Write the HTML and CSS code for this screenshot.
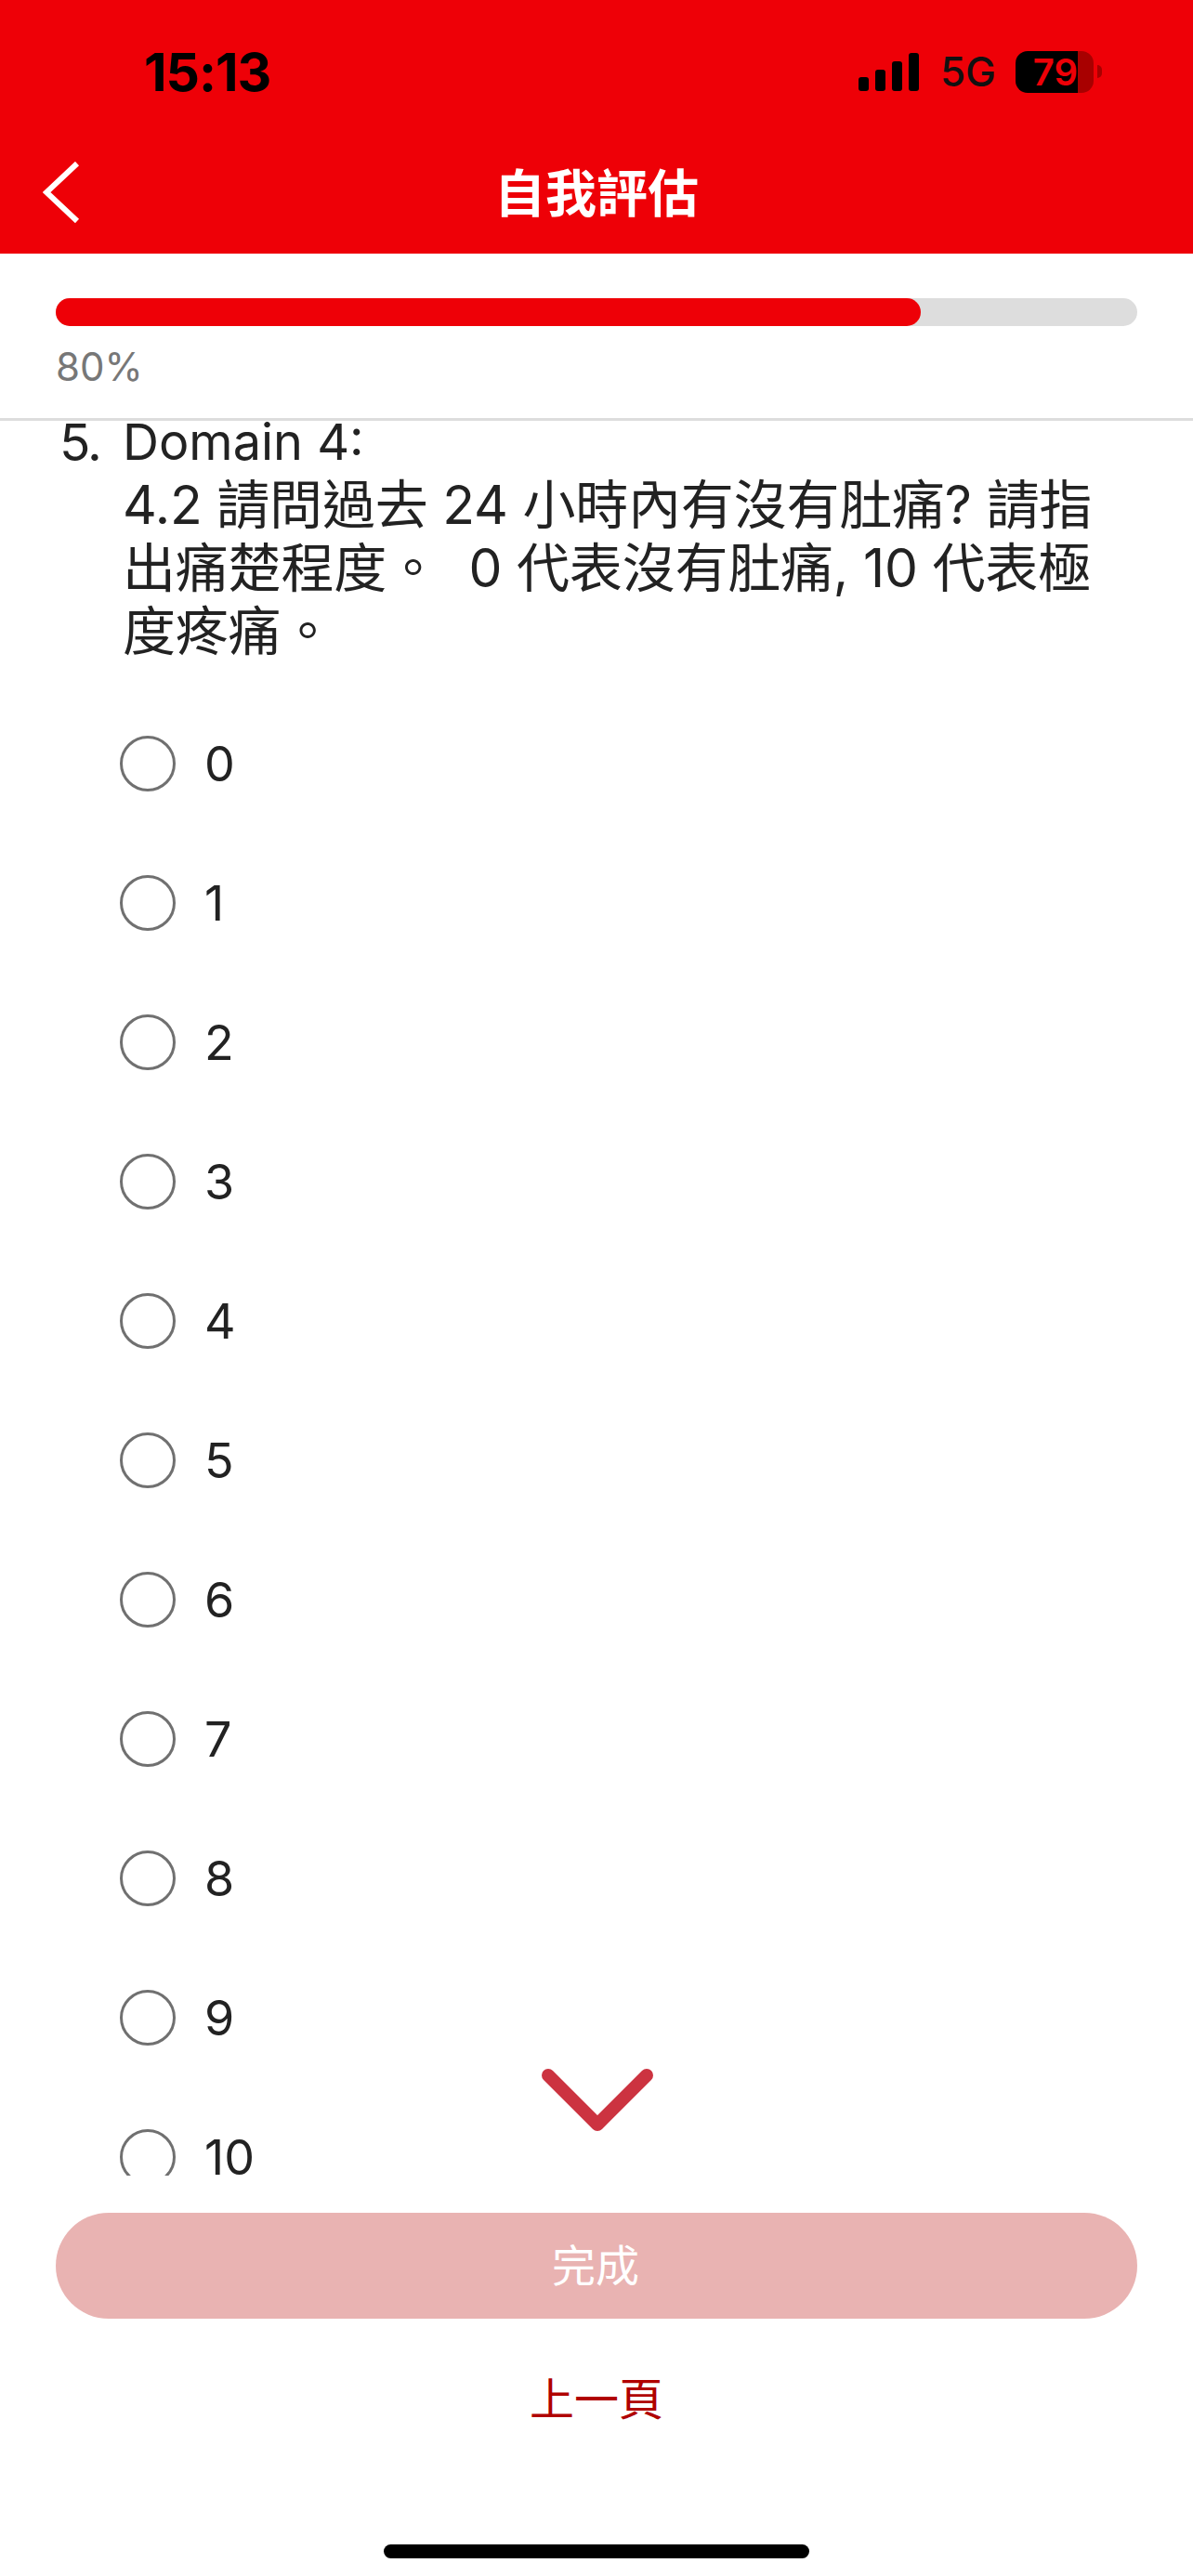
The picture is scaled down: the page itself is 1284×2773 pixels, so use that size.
FILE: index.html
```html
<!DOCTYPE html>
<html lang="zh-Hant">
<head>
    <meta charset="UTF-8">
    <meta name="viewport" content="width=device-width, initial-scale=1.0">
    <title>自我評估</title>
    <link rel="stylesheet" href="styles.css">
</head>
<body>

    <div id="app">
        <header class="top">
            <div class="status">
                <span class="time">15:13</span>
                <div class="status-right">
                    <svg class="signal" width="65" height="41" viewBox="0 0 65 41">
                        <rect x="0" y="26" width="11" height="15" rx="3"/>
                        <rect x="18" y="18" width="11" height="23" rx="3"/>
                        <rect x="36" y="9" width="11" height="32" rx="3"/>
                        <rect x="54" y="0" width="11" height="41" rx="3"/>
                    </svg>
                    <span class="network">5G</span>
                    <div class="battery"><span>79</span></div>
                    <div class="battery-nub"></div>
                </div>
            </div>
            <div class="nav">
                <svg class="back" width="40" height="66" viewBox="0 0 40 66">
                    <path d="M37 2 L4 33 L37 64" fill="none" stroke="#fff" stroke-width="6"/>
                </svg>
                <h1>自我評估</h1>
            </div>
        </header>

        <section class="progress">
            <div class="track"><div class="fill" style="width: 80%"></div></div>
            <div class="percent">80%</div>
        </section>

        <main class="content">
            <div class="question">
                <span class="num">5.</span>
                <div class="question-text">
                    <div class="domain">Domain 4:</div>
                    <p>4.2 請問過去 24 小時內有沒有肚痛? 請指出痛楚程度。 &nbsp;0 代表沒有肚痛, 10 代表極度疼痛。</p>
                </div>
            </div>
            <div class="options">
                <label class="option"><i class="radio"></i>0</label>
                <label class="option"><i class="radio"></i>1</label>
                <label class="option"><i class="radio"></i>2</label>
                <label class="option"><i class="radio"></i>3</label>
                <label class="option"><i class="radio"></i>4</label>
                <label class="option"><i class="radio"></i>5</label>
                <label class="option"><i class="radio"></i>6</label>
                <label class="option"><i class="radio"></i>7</label>
                <label class="option"><i class="radio"></i>8</label>
                <label class="option"><i class="radio"></i>9</label>
                <label class="option"><i class="radio"></i>10</label>
            </div>
            <svg class="more" width="120" height="68" viewBox="0 0 120 68">
                <path d="M7 7 L60 60 L113 7" fill="none" stroke="#cc3340" stroke-width="14" stroke-linecap="round" stroke-linejoin="round"/>
            </svg>
        </main>

        <footer class="actions">
            <button class="done">完成</button>
            <button class="prev">上一頁</button>
            <div class="home-bar"></div>
        </footer>
    </div>

</body>
</html>
```

FILE: styles.css
```css
* {
    box-sizing: border-box;
}

body {
    margin: 0;
    background-color: #fff;
    font-family: Inter, "Noto Sans CJK TC", sans-serif;
    color: #222;
}

#app {
    display: flex;
    flex-direction: column;
    height: 2773px;
    overflow: hidden;
}

.top {
    height: 273px;
    background-color: #ee0007;
}

.status {
    display: flex;
    justify-content: space-between;
    align-items: center;
    height: 154px;
    padding: 0 98px 0 155px;
}

.time {
    font-size: 57px;
    font-weight: 700;
    color: #000;
    letter-spacing: -1px;
}

.status-right {
    display: flex;
    align-items: center;
}

.signal {
    margin-left: 2px;
    margin-right: 23px;
}

.network {
    font-size: 44px;
    font-weight: 500;
    margin-right: 21px;
    color: #111;
}

.battery {
    display: flex;
    width: 84px;
    height: 45px;
    border-radius: 13px;
    background: linear-gradient(to right, #000 80%, #a80000 80%);
}

.battery span {
    width: 67px;
    font-size: 40px;
    font-weight: 600;
    line-height: 45px;
    text-align: right;
    color: #ee0007;
}

.battery-nub {
    width: 5px;
    height: 14px;
    margin-left: 4px;
    border-radius: 0 7px 7px 0;
    background-color: #a80000;
}

.nav {
    display: flex;
    justify-content: center;
    align-items: center;
    position: relative;
    height: 119px;
    padding-bottom: 19px;
}

.back {
    position: absolute;
    left: 46px;
    top: 20px;
}

.nav h1 {
    margin: 0;
    font-size: 55px;
    font-weight: 700;
    color: #fff;
}

.progress {
    height: 180px;
    padding: 48px 60px 0;
    border-bottom: 3px solid #ddd;
}

.track {
    height: 30px;
    border-radius: 15px;
    background-color: #ddd;
}

.fill {
    height: 100%;
    border-radius: 15px;
    background-color: #ee0007;
}

.percent {
    margin-top: 18px;
    font-size: 42px;
    color: #777;
}

.content {
    position: relative;
    height: 1889px;
    overflow: hidden;
}

.question {
    display: flex;
    margin-top: -11px;
    padding: 0 70px 0 64px;
    font-size: 57px;
    line-height: 68px;
}

.num {
    width: 68px;
    flex-shrink: 0;
    font-size: 55px;
    letter-spacing: -2px;
}

.domain {
    font-size: 54px;
}

.question p {
    margin: 0;
    letter-spacing: -0.2px;
}

.options {
    padding-top: 33px;
}

.option {
    display: flex;
    align-items: center;
    height: 150px;
    padding-left: 129px;
    font-size: 52px;
}

.radio {
    width: 60px;
    height: 60px;
    margin-right: 31px;
    border: 3px solid #707070;
    border-radius: 50%;
}

.more {
    position: absolute;
    left: 583px;
    top: 1774px;
}

.actions {
    display: flex;
    flex-direction: column;
    align-items: center;
    padding: 40px 60px 0;
}

button {
    font-family: inherit;
    border: none;
    background: none;
}

.done {
    width: 100%;
    height: 114px;
    padding: 0 2px 8px 0;
    border-radius: 57px;
    background-color: #e9b3b2;
    color: #fff;
    font-size: 47px;
}

.prev {
    height: 114px;
    margin-top: 26px;
    color: #b00000;
    font-size: 48px;
}

.home-bar {
    width: 458px;
    height: 15px;
    margin-top: 103px;
    border-radius: 8px;
    background-color: #000;
}
```
